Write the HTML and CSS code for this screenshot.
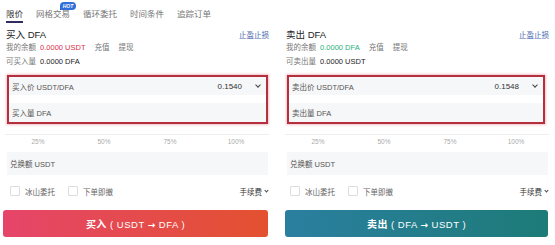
FILE: index.html
```html
<!DOCTYPE html>
<html lang="zh-CN">
<head>
  <meta charset="UTF-8" />
  <title>币币交易</title>
  <link rel="stylesheet" href="styles.css">
</head>
<body>

  <div class="tabs">
    <span class="tab active">限价</span>
    <span class="tab">网格交易<span class="hot">HOT</span></span>
    <span class="tab">循环委托</span>
    <span class="tab">时间条件</span>
    <span class="tab">追踪订单</span>
  </div>

  <div class="trade">
    <div class="panel buy">
      <div class="head">
        <span class="title">买入 DFA</span>
        <span class="link">止盈止损</span>
      </div>
      <div class="line">我的余额 <b class="red">0.0000 USDT</b><span class="act">充值</span><span class="act">提现</span></div>
      <div class="line">可买入量 <b>0.0000 DFA</b></div>

      <div class="box">
        <div class="field">
          <span>买入价 USDT/DFA</span>
          <span class="val">0.1540</span>
          <span class="chev"></span>
        </div>
        <div class="field">
          <span>买入量 DFA</span>
        </div>
      </div>

      <div class="slider">
        <span>25%</span><span>50%</span><span>75%</span><span>100%</span>
      </div>

      <div class="field total">兑换额 USDT</div>

      <div class="opts">
        <label><i class="check"></i>冰山委托</label>
        <label><i class="check"></i>下单即撤</label>
        <span class="fee">手续费<span class="chev"></span></span>
      </div>

      <button class="btn btn-buy"><b>买入</b> ( USDT <span class="arrow">→</span> DFA )</button>
    </div>

    <div class="panel sell">
      <div class="head">
        <span class="title">卖出 DFA</span>
        <span class="link">止盈止损</span>
      </div>
      <div class="line">我的余额 <b class="green">0.0000 DFA</b><span class="act">充值</span><span class="act">提现</span></div>
      <div class="line">可卖出量 <b>0.0000 USDT</b></div>

      <div class="box">
        <div class="field">
          <span>卖出价 USDT/DFA</span>
          <span class="val">0.1548</span>
          <span class="chev"></span>
        </div>
        <div class="field">
          <span>卖出量 DFA</span>
        </div>
      </div>

      <div class="slider">
        <span>25%</span><span>50%</span><span>75%</span><span>100%</span>
      </div>

      <div class="field total">兑换额 USDT</div>

      <div class="opts">
        <label><i class="check"></i>冰山委托</label>
        <label><i class="check"></i>下单即撤</label>
        <span class="fee">手续费<span class="chev"></span></span>
      </div>

      <button class="btn btn-sell"><b>卖出</b> ( DFA <span class="arrow">→</span> USDT )</button>
    </div>
  </div>

</body>
</html>
```

FILE: styles.css
```css
body {
  margin: 0;
  background: #fff;
  font-family: "Liberation Sans", "Noto Sans CJK SC", sans-serif;
  font-size: 7.5px;
  color: #666;
}
.tabs {
  display: flex;
  gap: 13px;
  height: 26px;
  padding: 7px 0 0 6px;
  box-sizing: border-box;
  font-size: 8.5px;
}
.tab {
  position: relative;
  height: 16px;
  line-height: 14px;
  color: #777;
}
.tab.active {
  color: #333;
  border-bottom: 2px solid #2e2d5e;
  box-sizing: border-box;
}
.hot {
  position: absolute;
  left: 24px;
  top: -5px;
  width: 16px;
  height: 8px;
  line-height: 8px;
  border-radius: 5px 5px 5px 0;
  background: #2f6fd8;
  color: #fff;
  font-size: 5px;
  font-weight: bold;
  font-style: italic;
  text-align: center;
}
.trade {
  display: flex;
  gap: 16px;
  padding-left: 5px;
}
.panel {
  width: 264px;
  padding-top: 1px;
}
.head {
  display: flex;
  justify-content: space-between;
  align-items: center;
  height: 14px;
}
.title {
  font-size: 9.5px;
  color: #222;
  padding-left: 1px;
}
.link {
  font-size: 7.5px;
  color: #4b68b0;
}
.line {
  height: 14px;
  line-height: 14px;
  padding-left: 1px;
  color: #777;
}
.line b {
  font-weight: normal;
  color: #222;
  margin-left: 2px;
}
.line b.red { color: #d9304a; }
.line b.green { color: #27b07a; }
.act {
  margin-left: 9px;
  color: #777;
}
.box {
  margin: 6px 1px 0 2px;
  border: 2px solid #b5303f;
  box-shadow: 0 0 2px 1px #f3c3c8;
}
.sell .box {
  margin-right: 4px;
}
.field {
  display: flex;
  align-items: center;
  height: 18px;
  padding: 0 6px 0 3px;
  background: #f6f7f8;
  color: #555;
}
.box .field + .field {
  margin-top: 8px;
  height: 19px;
}
.val {
  margin-left: auto;
  margin-right: 14px;
  color: #333;
  font-size: 8px;
}
.chev {
  width: 3px;
  height: 3px;
  border-right: 1.2px solid #444;
  border-bottom: 1.2px solid #444;
  transform: rotate(45deg);
  margin-bottom: 2px;
}
.slider {
  display: flex;
  margin-top: 10px;
  border-top: 1px solid #eceef0;
  height: 16px;
  padding-top: 1px;
}
.slider span {
  flex: 1;
  text-align: center;
  font-size: 6.5px;
  color: #aaa;
  line-height: 12px;
}
.total {
  height: 23px;
  margin: 0 1px 0 2px;
  padding-left: 3px;
}
.opts {
  display: flex;
  align-items: center;
  height: 32px;
  padding: 0 1px 0 5px;
  gap: 13px;
  color: #666;
}
.opts label {
  display: flex;
  align-items: center;
  gap: 5px;
}
.check {
  width: 8px;
  height: 8px;
  border: 1px solid #dcdcdc;
  border-radius: 1px;
}
.fee {
  margin-left: auto;
  display: flex;
  align-items: center;
  gap: 3px;
  color: #333;
}
.fee .chev {
  width: 2px;
  height: 2px;
  border-width: 1px;
}
.btn {
  display: block;
  width: 265px;
  height: 27px;
  margin: 3px 0 0 -2px;
  border: none;
  border-radius: 3px;
  color: #fff;
  font-family: inherit;
  font-size: 9.5px;
  letter-spacing: 0.5px;
}
.btn b {
  font-size: 10px;
}
.arrow {
  font-family: "DejaVu Sans", sans-serif;
  font-weight: bold;
  font-size: 9px;
}
.btn-buy {
  background: linear-gradient(90deg, #e6456a, #e3512f);
}
.btn-sell {
  margin-left: 0;
  width: 263px;
  background: linear-gradient(90deg, #2a7f9f, #1d7b78);
}
```
